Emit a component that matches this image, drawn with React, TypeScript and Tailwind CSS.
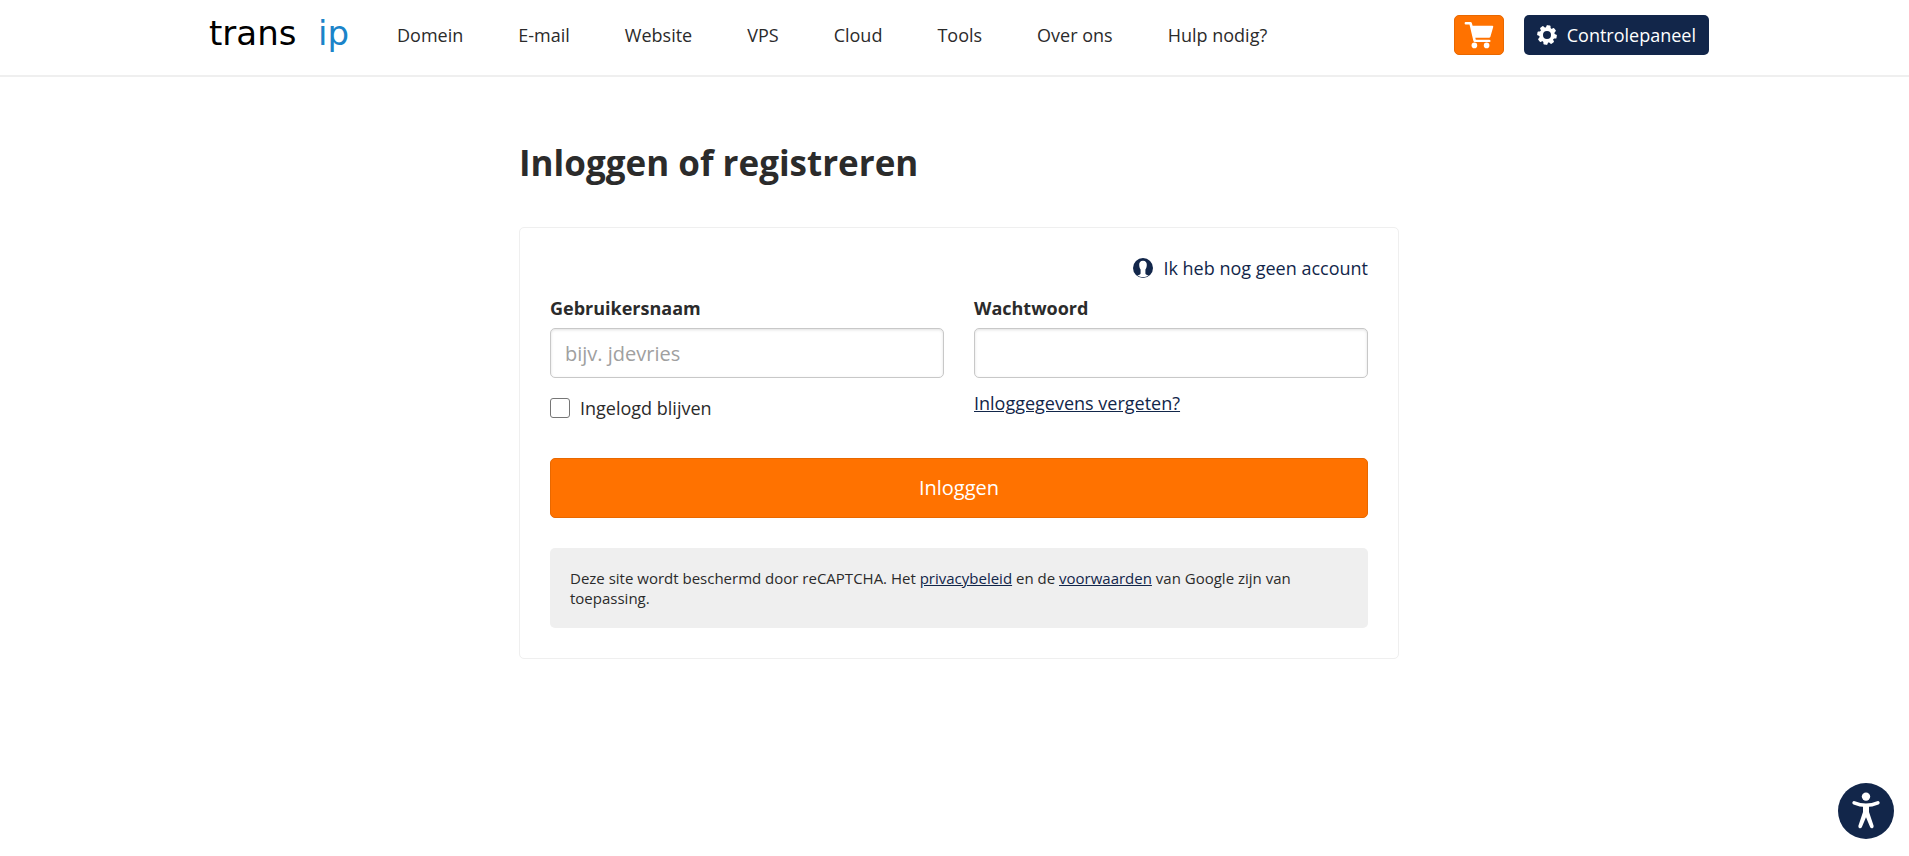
import type { ReactNode } from "react";

const navItems = ["Domein", "E-mail", "Website", "VPS", "Cloud", "Tools", "Over ons", "Hulp nodig?"];

function Logo() {
  return (
    <a href="#home" className="flex w-[140px] shrink-0 items-baseline justify-between font-['DejaVu_Sans',sans-serif] text-[34px] leading-9">
      <span className="text-black">trans</span>
      <span className="text-[#1b84c9]">ip</span>
    </a>
  );
}

function CartIcon() {
  return (
    <svg width="30" height="28" viewBox="0 0 30 28" fill="#fff" aria-hidden="true">
      <path d="M1.8 1H6.4Q7.6 1 7.9 2.2L8.6 4.8H28.2Q29.6 4.8 29.2 6.1L26.4 15.8Q26.1 16.8 25 16.8H11.3L11.8 18.8H25.4Q26.6 19 26.6 20Q26.6 21 25.4 21H10.8Q9.7 21 9.4 19.9L5.5 3.6H1.8Q.6 3.4 .6 2.3Q.6 1 1.8 1Z" />
      <circle cx="10.4" cy="24.4" r="2.8" />
      <circle cx="22.6" cy="24.4" r="2.8" />
    </svg>
  );
}

function GearIcon() {
  const teeth = [0, 45, 90, 135, 180, 225, 270, 315];
  return (
    <svg width="20" height="20" viewBox="0 0 20 20" aria-hidden="true">
      <g fill="#fff">
        {teeth.map((angle) => (
          <path key={angle} d="M7.4 4L8 .8Q8.2 .2 8.8 .2H11.2Q11.8 .2 12 .8L12.6 4Z" transform={`rotate(${angle + 10} 10 10)`} />
        ))}
      </g>
      <circle cx="10" cy="10" r="5.9" fill="none" stroke="#fff" strokeWidth="3.8" />
    </svg>
  );
}

function AccountIcon() {
  return (
    <svg width="20" height="20" viewBox="0 0 20 20" aria-hidden="true">
      <circle cx="10" cy="10" r="10" fill="#12264a" />
      <path d="M10 2.8C12.7 2.8 13.9 4.6 13.8 7C13.7 9.2 13.1 10.6 12.4 11.6V15.4C12.5 16.7 14.2 17 15.8 17.4Q13 19.2 10 19.2T4.2 17.4C5.8 17 7.5 16.7 7.6 15.4V11.6C6.9 10.6 6.3 9.2 6.2 7C6.1 4.6 7.3 2.8 10 2.8Z" fill="#fff" />
    </svg>
  );
}

function AccessibilityIcon() {
  return (
    <svg width="28" height="38" viewBox="0 0 28 38" aria-hidden="true">
      <circle cx="14" cy="4.6" r="4.2" fill="#fff" />
      <path d="M2.2 10.8Q8 13.2 14 13.2T25.8 10.8" fill="none" stroke="#fff" strokeWidth="3.6" strokeLinecap="round" />
      <path d="M11 12H17V20L21.6 33.8Q22 35.6 20.5 36.2Q19 36.6 18.2 35.2L14 25.2L9.8 35.2Q9 36.6 7.5 36.2Q6 35.6 6.4 33.8L11 20Z" fill="#fff" />
    </svg>
  );
}

function InlineLink({ href, children }: { href: string; children: ReactNode }) {
  return (
    <a href={href} className="text-[#12264a] underline">
      {children}
    </a>
  );
}

const inputClass =
  "h-[50px] w-full rounded-[5px] border border-[#c8c8c8] bg-white px-3.5 text-xl shadow-[inset_0_1px_3px_rgba(0,0,0,0.12)] outline-none placeholder:text-[#a0a0a0]";

export default function App() {
  return (
    <div className="min-h-screen bg-white pl-[9px] font-['Open_Sans',sans-serif] text-lg leading-5 text-[#2b2b2b]">
      <header className="-ml-[9px] border-b-2 border-[#efefef] pl-[9px]">
        <div className="mx-auto flex h-[75px] max-w-[1500px] items-start pt-[15px]">
          <Logo />
          <nav className="ml-12 flex h-10 items-center gap-[55px] font-medium whitespace-nowrap">
            {navItems.map((item) => (
              <a key={item} href="#menu">
                {item}
              </a>
            ))}
          </nav>
          <div className="ml-auto flex gap-5">
            <button type="button" aria-label="Winkelwagen" className="flex h-10 w-[50px] items-center justify-center rounded-[5px] border border-[#e86800] bg-[#ff7200]">
              <CartIcon />
            </button>
            <a href="#controlepaneel" className="flex h-10 items-center gap-2.5 rounded-[5px] bg-[#12264a] px-[13px] text-white">
              <GearIcon />
              Controlepaneel
            </a>
          </div>
        </div>
      </header>

      <main className="mx-auto max-w-[880px] pt-[61px]">
        <h1 className="text-[35px] leading-[50px] font-bold">Inloggen of registreren</h1>
        <form className="mt-[39px] rounded-[5px] border border-[#efefef] p-[30px]">
          <div className="flex justify-end">
            <a href="#account" className="flex items-center gap-2.5 text-[#12264a]">
              <AccountIcon />
              Ik heb nog geen account
            </a>
          </div>
          <div className="mt-5 grid grid-cols-2 gap-[30px]">
            <div>
              <label htmlFor="username" className="mb-2.5 block font-bold">Gebruikersnaam</label>
              <input id="username" type="text" placeholder="bijv. jdevries" className={inputClass} />
              <label className="mt-5 flex items-center gap-2.5">
                <input type="checkbox" className="size-5 appearance-none rounded-[3px] border border-[#767676] bg-white" />
                Ingelogd blijven
              </label>
            </div>
            <div>
              <label htmlFor="password" className="mb-2.5 block font-bold">Wachtwoord</label>
              <input id="password" type="password" className={inputClass} />
              <p className="mt-[15px]">
                <InlineLink href="#vergeten">Inloggegevens vergeten?</InlineLink>
              </p>
            </div>
          </div>
          <button type="button" className="mt-10 h-[60px] w-full rounded-[5px] border border-[#e86800] bg-[#ff7200] text-xl text-white">
            Inloggen
          </button>
          <p className="mt-[30px] rounded-[5px] bg-[#efefef] p-5 text-[15px] leading-5">
            Deze site wordt beschermd door reCAPTCHA. Het <InlineLink href="#privacy">privacybeleid</InlineLink> en de{" "}
            <InlineLink href="#voorwaarden">voorwaarden</InlineLink> van Google zijn van toepassing.
          </p>
        </form>
      </main>

      <button type="button" aria-label="Toegankelijkheid" className="fixed right-[15px] bottom-[17px] flex size-14 items-center justify-center rounded-full bg-[#12264a]">
        <AccessibilityIcon />
      </button>
    </div>
  );
}
